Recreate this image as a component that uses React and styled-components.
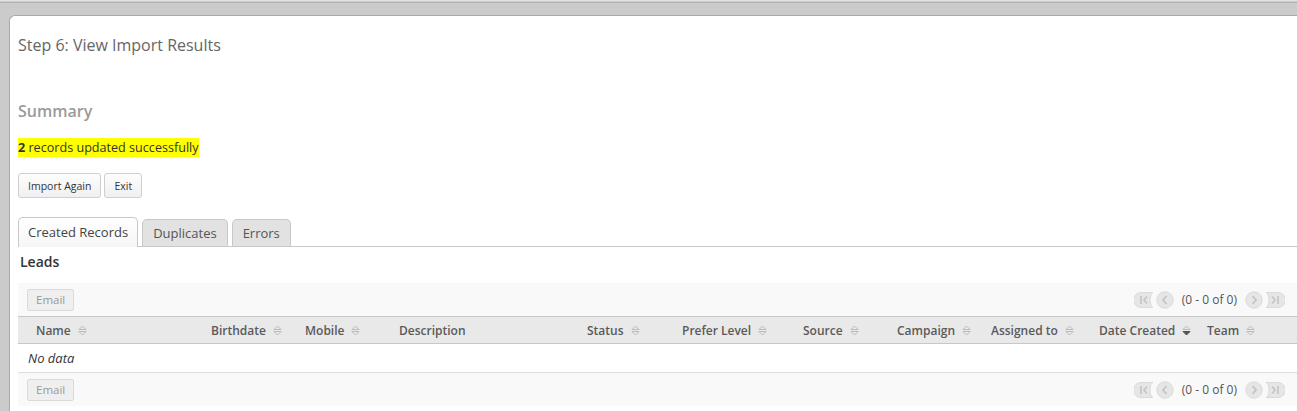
import React from 'react';
import styled, { createGlobalStyle } from 'styled-components';

const GlobalStyle = createGlobalStyle`
  html, body {
    margin: 0;
    padding: 0;
    background: #cbcbcb;
    font-family: "Open Sans", "Liberation Sans", sans-serif;
    overflow: hidden;
  }
`;

const Frame = styled.div`
  height: 411px;
  box-sizing: border-box;
  border-top: 1px solid #e4e4e4;
  padding-top: 14px;
  padding-left: 9px;
  position: relative;
  &::before {
    content: '';
    position: absolute;
    left: 0;
    right: 0;
    top: 1px;
    height: 1px;
    background: #b4b4b4;
  }
`;

const Panel = styled.div`
  background: #fff;
  border-top: 1px solid #a9a9a9;
  border-left: 1px solid #a9a9a9;
  border-top-left-radius: 6px;
  height: 100%;
  box-sizing: border-box;
  padding: 19px 0 0 8px;
`;

const Title = styled.h2`
  margin: 0;
  font-size: 16px;
  line-height: 20px;
  font-weight: 400;
  color: #666;
`;

const SectionHeading = styled.h3`
  margin: 45px 0 0;
  font-size: 16px;
  line-height: 22px;
  font-weight: 600;
  color: #9a9a9a;
`;

const Message = styled.p`
  margin: 17px 0 0;
  font-size: 12.6px;
  line-height: 18px;
  color: #333;
  span {
    background: #ffff00;
    padding: 1px 0;
  }
  b {
    font-weight: 700;
  }
`;

const ButtonRow = styled.div`
  display: flex;
  gap: 3px;
  margin-top: 16px;
`;

const Button = styled.button`
  font-family: inherit;
  font-size: 10.5px;
  color: #333;
  height: 25px;
  padding: 0 9px;
  border: 1px solid #cfcfcf;
  border-radius: 3px;
  background: linear-gradient(#fdfdfd, #f0f0f0);
`;

const Tabs = styled.div`
  display: flex;
  align-items: flex-end;
  gap: 4px;
  margin-top: 19px;
  height: 29px;
  border-bottom: 1px solid #c8c8c8;
`;

const Tab = styled.div`
  box-sizing: border-box;
  padding: 0 ${p => (p.$active ? '9px' : '10px')};
  display: flex;
  align-items: center;
  font-size: 13px;
  color: ${p => (p.$active ? '#444' : '#555')};
  background: ${p => (p.$active ? 'linear-gradient(#fff, #f6f6f6)' : '#e2e2e2')};
  border: 1px solid #c8c8c8;
  border-bottom: none;
  border-radius: 5px 5px 0 0;
  margin-bottom: ${p => (p.$active ? '-1px' : '0')};
  height: ${p => (p.$active ? '30px' : '27px')};
  ${p => (p.$active ? 'padding-bottom: 1px;' : '')}
`;

const GridTitle = styled.div`
  margin: 5px 0 0 2px;
  font-size: 14px;
  line-height: 20px;
  font-weight: 600;
  color: #333;
`;

const Toolbar = styled.div`
  margin-top: ${p => (p.$top ? '11px' : '0')};
  height: 33px;
  background: #f9f9f9;
  display: flex;
  align-items: center;
  justify-content: space-between;
  padding: 0 12px 0 9px;
`;

const DisabledButton = styled.button`
  font-family: inherit;
  font-size: 11.5px;
  color: #999;
  height: 22px;
  padding: 0 8px;
  border: 1px solid #dadada;
  border-radius: 2px;
  background: #efefef;
`;

const Pager = styled.div`
  display: flex;
  align-items: center;
  gap: 2px;
  font-size: 12px;
  color: #555;
`;

const PagerText = styled.span`
  margin: 0 6px;
`;

const columns = '175px 94px 94px 188px 95px 121px 94px 94px 108px 108px 1fr';

const HeaderRow = styled.div`
  display: grid;
  grid-template-columns: ${columns};
  height: 28px;
  box-sizing: border-box;
  background: #e9e9e9;
  border-top: 1px solid #c8c8c8;
  border-bottom: 1px solid #c8c8c8;
  padding-left: 10px;
`;

const HeaderCell = styled.div`
  display: flex;
  align-items: center;
  padding-left: 8px;
  gap: 7px;
  font-size: 12px;
  font-weight: 600;
  color: #5a5a5a;
  white-space: nowrap;
`;

const EmptyRow = styled.div`
  height: 29px;
  box-sizing: border-box;
  border-bottom: 1px solid #dcdcdc;
  display: flex;
  align-items: center;
  padding-left: 10px;
  font-size: 13px;
  font-style: italic;
  color: #333;
`;

const SortIcon = ({ down }) => (
  <svg width="9" height="11" viewBox="0 0 9 11">
    <path d="M1 4.5 L4.5 1 L8 4.5 Z" fill="none" stroke="#bbb" strokeWidth="1" strokeLinejoin="round" />
    {down ? (
      <path d="M1 6.5 L4.5 10 L8 6.5 Z" fill="#555" stroke="#555" strokeWidth="1" strokeLinejoin="round" />
    ) : (
      <path d="M1 6.5 L4.5 10 L8 6.5 Z" fill="none" stroke="#bbb" strokeWidth="1" strokeLinejoin="round" />
    )}
  </svg>
);

const EdgeButton = ({ last }) => (
  <svg width="20" height="16" viewBox="0 0 20 16">
    <path
      d={last ? 'M1 0.5 H13 A7.5 7.5 0 0 1 13 15.5 H1 A3 7.5 0 0 0 1 0.5 Z' : 'M19 0.5 H7 A7.5 7.5 0 0 0 7 15.5 H19 A3 7.5 0 0 1 19 0.5 Z'}
      fill="#e6e6e6"
      stroke="#dadada"
    />
    {last ? (
      <g stroke="#c4c4c4" strokeWidth="1.6" fill="none">
        <path d="M7 4.5 L10 8 L7 11.5" />
        <path d="M13 4 V12" />
      </g>
    ) : (
      <g stroke="#c4c4c4" strokeWidth="1.6" fill="none">
        <path d="M7 4 V12" />
        <path d="M13 4.5 L10 8 L13 11.5" />
      </g>
    )}
  </svg>
);

const RoundButton = ({ next }) => (
  <svg width="18" height="18" viewBox="0 0 18 18">
    <circle cx="9" cy="9" r="8.2" fill="#e6e6e6" stroke="#dadada" />
    <path
      d={next ? 'M7.5 5 L11 9 L7.5 13' : 'M10.5 5 L7 9 L10.5 13'}
      stroke="#c4c4c4"
      strokeWidth="1.8"
      fill="none"
    />
  </svg>
);

const Pagination = () => (
  <Pager>
    <EdgeButton />
    <RoundButton />
    <PagerText>(0 - 0 of 0)</PagerText>
    <RoundButton next />
    <EdgeButton last />
  </Pager>
);

const headers = [
  { label: 'Name', sort: true },
  { label: 'Birthdate', sort: true },
  { label: 'Mobile', sort: true },
  { label: 'Description', sort: false },
  { label: 'Status', sort: true },
  { label: 'Prefer Level', sort: true },
  { label: 'Source', sort: true },
  { label: 'Campaign', sort: true },
  { label: 'Assigned to', sort: true },
  { label: 'Date Created', sort: true, down: true },
  { label: 'Team', sort: true },
];

export default function App() {
  return (
    <>
      <GlobalStyle />
      <Frame>
        <Panel>
          <Title>Step 6: View Import Results</Title>
          <SectionHeading>Summary</SectionHeading>
          <Message>
            <span><b>2</b> records updated successfully</span>
          </Message>
          <ButtonRow>
            <Button>Import Again</Button>
            <Button>Exit</Button>
          </ButtonRow>
          <Tabs>
            <Tab $active>Created Records</Tab>
            <Tab>Duplicates</Tab>
            <Tab>Errors</Tab>
          </Tabs>
          <GridTitle>Leads</GridTitle>
          <Toolbar $top>
            <DisabledButton disabled>Email</DisabledButton>
            <Pagination />
          </Toolbar>
          <HeaderRow>
            {headers.map(h => (
              <HeaderCell key={h.label}>
                {h.label}
                {h.sort && <SortIcon down={h.down} />}
              </HeaderCell>
            ))}
          </HeaderRow>
          <EmptyRow>No data</EmptyRow>
          <Toolbar>
            <DisabledButton disabled>Email</DisabledButton>
            <Pagination />
          </Toolbar>
        </Panel>
      </Frame>
    </>
  );
}
